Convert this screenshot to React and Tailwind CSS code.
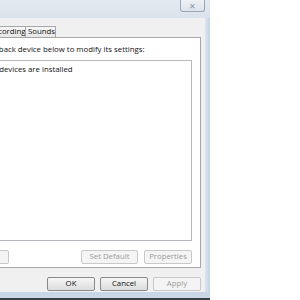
import React from 'react';

const font = { fontFamily: '"Open Sans", "Noto Sans", sans-serif' };

function Btn({ label, disabled, className = '' }) {
  return (
    <div
      className={`h-[14px] flex items-center justify-center rounded-[2px] border text-[7.8px] leading-none whitespace-nowrap ${
        disabled
          ? 'border-[#c9c9c9] bg-[#f4f4f4] text-[#9a9a9a]'
          : 'border-[#8a8a8a] bg-gradient-to-b from-[#f6f6f6] to-[#dcdcdc] text-[#111]'
      } ${className}`}
    >
      {label}
    </div>
  );
}

export default function App() {
  return (
    <div className="w-[300px] h-[300px] overflow-hidden bg-white flex" style={font}>
      {/* dialog window, partly off the left edge */}
      <div className="ml-[-59px] w-[269px] h-[300px] shrink-0 flex flex-col bg-[#d3dfec]">
        {/* title bar */}
        <div className="h-[18px] flex justify-end items-start pr-[5px] bg-gradient-to-b from-[#e3e9f0] to-[#dae3ec]">
          <div className="w-[25px] h-[12px] flex items-center justify-center rounded-b-[3px] border border-t-0 border-[#9aa7b6] bg-gradient-to-b from-[#eef2f6] to-[#dde4ec] text-[8px] text-[#8d96a1] leading-none">
            ✕
          </div>
        </div>

        <div className="flex-1 flex">
          {/* client area */}
          <div className="w-[264px] h-[274px] bg-[#f0f0f0] flex flex-col pt-[8px] pr-[4px]">
            {/* tabs */}
            <div className="flex items-end h-[11px] pl-[4px] text-[7.8px] text-[#111] leading-none">
              <div className="w-[41px] h-[12px] -mb-[1px] border border-b-0 border-[#9a9a9a] bg-white" />
              <div className="w-[40px] h-[11px] pl-[3px] flex items-center border border-l-0 border-b-0 border-[#a8a8a8] bg-gradient-to-b from-[#f7f7f7] to-[#e6e6e6] whitespace-nowrap overflow-hidden">
                Recording
              </div>
              <div className="w-[30px] h-[11px] pl-[2px] flex items-center border border-l-0 border-b-0 border-[#a8a8a8] bg-gradient-to-b from-[#f7f7f7] to-[#e6e6e6] whitespace-nowrap overflow-hidden">
                Sounds
              </div>
            </div>

            {/* tab panel */}
            <div className="h-[231px] border border-[#a6a6a6] bg-white flex flex-col pl-[12px] pr-[8px]">
              <div className="h-[22px] pt-[8px] text-[7.8px] leading-none text-[#111] whitespace-nowrap">
                Select a playback device below to modify its settings:
              </div>
              <div className="h-[181px] border border-[#b4b6bb] bg-white pt-[5px] pl-[9px] text-[7.8px] leading-none text-[#111] whitespace-nowrap">
                No audio devices are installed
              </div>
              <div className="flex items-center mt-[9px]">
                <Btn label="Configure" disabled className="w-[55px]" />
                <div className="flex-1" />
                <Btn label="Set Default" disabled className="w-[57px]" />
                <Btn label="Properties" disabled className="w-[48px] ml-[6px]" />
              </div>
            </div>

            {/* dialog buttons */}
            <div className="flex justify-end gap-[5px] mt-[9px]">
              <Btn label="OK" className="w-[48px]" />
              <Btn label="Cancel" className="w-[48px]" />
              <Btn label="Apply" disabled className="w-[48px]" />
            </div>
          </div>
          {/* right frame */}
          <div className="w-[5px] bg-gradient-to-r from-[#dbe5ef] to-[#c4d3e3]" />
        </div>
        <div className="h-[8px] bg-[#c8d6e5] border-b-2 border-[#3a3f46]" />
      </div>
    </div>
  );
}
